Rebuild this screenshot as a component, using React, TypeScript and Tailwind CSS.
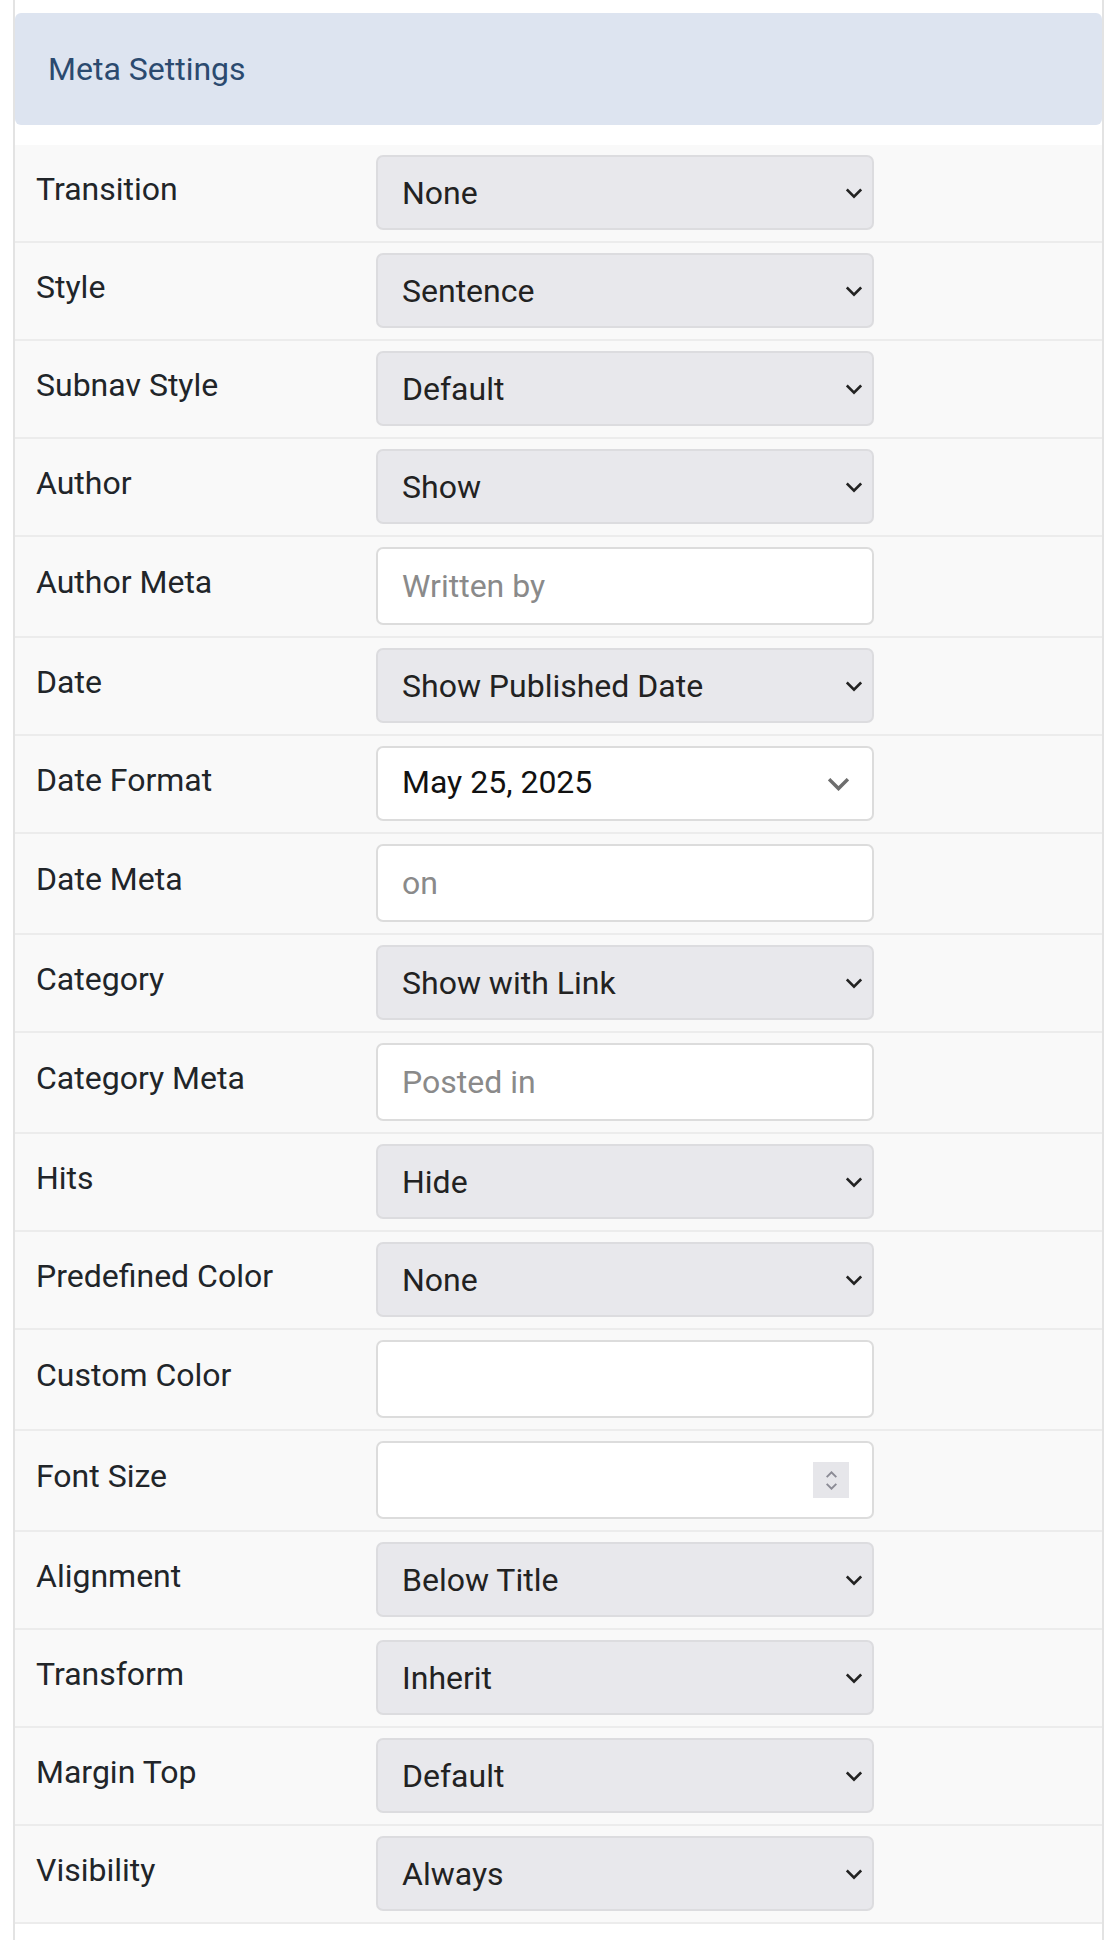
type Field =
  | { label: string; kind: "select"; value: string }
  | { label: string; kind: "input"; placeholder?: string }
  | { label: string; kind: "choice"; value: string }
  | { label: string; kind: "number" };

const fields: Field[] = [
  { label: "Transition", kind: "select", value: "None" },
  { label: "Style", kind: "select", value: "Sentence" },
  { label: "Subnav Style", kind: "select", value: "Default" },
  { label: "Author", kind: "select", value: "Show" },
  { label: "Author Meta", kind: "input", placeholder: "Written by" },
  { label: "Date", kind: "select", value: "Show Published Date" },
  { label: "Date Format", kind: "choice", value: "May 25, 2025" },
  { label: "Date Meta", kind: "input", placeholder: "on" },
  { label: "Category", kind: "select", value: "Show with Link" },
  { label: "Category Meta", kind: "input", placeholder: "Posted in" },
  { label: "Hits", kind: "select", value: "Hide" },
  { label: "Predefined Color", kind: "select", value: "None" },
  { label: "Custom Color", kind: "input" },
  { label: "Font Size", kind: "number" },
  { label: "Alignment", kind: "select", value: "Below Title" },
  { label: "Transform", kind: "select", value: "Inherit" },
  { label: "Margin Top", kind: "select", value: "Default" },
  { label: "Visibility", kind: "select", value: "Always" },
];

function Chevron({ className }: { className?: string }) {
  return (
    <svg viewBox="0 0 18 11" className={className} fill="none">
      <path d="M2 2l7 7 7-7" stroke="currentColor" strokeWidth="3" strokeLinecap="square" />
    </svg>
  );
}

function Control({ field }: { field: Field }) {
  if (field.kind === "select") {
    return (
      <div className="flex items-center justify-between h-[75px] w-[498px] pl-[24px] pr-[10px] bg-[#e8e8ec] border-2 border-[#dcdcdf] rounded-[7px] text-[32px] text-[#222]">
        <span>{field.value}</span>
        {/* native-style arrow */}
        <Chevron className="w-[16px] h-[11px] mt-[2px] text-[#222]" />
      </div>
    );
  }

  if (field.kind === "choice") {
    return (
      <div className="flex items-center justify-between h-[75px] w-[498px] pl-[24px] pr-[23px] bg-white border-2 border-[#dcdcdc] rounded-[7px] text-[32px] text-[#111]">
        <span className="mb-[3px]">{field.value}</span>
        <Chevron className="w-[21px] h-[13px] mt-[2px] text-[#6e6e6e]" />
      </div>
    );
  }

  if (field.kind === "number") {
    return (
      <div className="flex items-center justify-end h-[78px] w-[498px] pr-[23px] bg-white border-2 border-[#dcdcdc] rounded-[7px]">
        {/* spin buttons */}
        <div className="flex flex-col items-center justify-center gap-[5px] w-[36px] h-[36px] bg-[#e6e6ea]">
          <svg viewBox="0 0 14 8" className="w-[13px] h-[7px]" fill="none">
            <path d="M1.5 7L7 1.5 12.5 7" stroke="#8b8b95" strokeWidth="2.2" />
          </svg>
          <svg viewBox="0 0 14 8" className="w-[13px] h-[7px]" fill="none">
            <path d="M1.5 1L7 6.5 12.5 1" stroke="#8b8b95" strokeWidth="2.2" />
          </svg>
        </div>
      </div>
    );
  }

  return (
    <input
      readOnly
      placeholder={field.placeholder}
      className="h-[78px] w-[498px] px-[24px] bg-white border-2 border-[#dcdcdc] rounded-[7px] text-[32px] text-[#222] placeholder:text-[#8a8a8a] outline-none"
    />
  );
}

export default function App() {
  return (
    <div className="min-h-[1940px] bg-white" style={{ fontFamily: "Roboto, 'Noto Sans', sans-serif" }}>
      <div className="ml-[13px] w-[1091px] min-h-[1940px] border-x-2 border-[#e3e3e3] pt-[13px]">
        {/* Header */}
        <div className="flex items-center h-[112px] pl-[33px] bg-[#dde4f0] rounded-[6px]">
          <h2 className="text-[32px] text-[#2b4a6f]">Meta Settings</h2>
        </div>

        {/* Rows */}
        <div className="mt-[20px]">
          {fields.map((f) => (
            <div
              key={f.label}
              className="flex items-center pl-[21px] pt-[10px] pb-[11px] bg-[#f9f9f9] border-b-2 border-[#ececec]"
            >
              <div className="w-[340px] mb-[8px] text-[32px] text-[#212529]">{f.label}</div>
              <Control field={f} />
            </div>
          ))}
        </div>
      </div>
    </div>
  );
}
